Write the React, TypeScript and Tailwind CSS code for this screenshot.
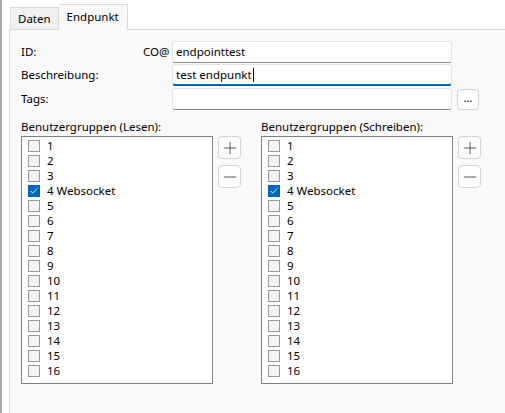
import { Check, Minus, Plus } from 'lucide-react'

const groups = ['1', '2', '3', '4 Websocket', '5', '6', '7', '8', '9', '10', '11', '12', '13', '14', '15', '16']

const TextField = ({ value, focused }: { value: string; focused?: boolean }) => (
    <div
        className={`w-[280px] h-[22px] bg-white rounded-[3px] border border-[#e3e3e3] flex items-center pl-[3px] text-[11.5px] text-black ${
            focused ? 'border-b-2 border-b-[#0067c0]' : 'border-b-[#8a8a8a]'
        }`}
    >
        <span>{value}</span>
        {focused && <span className="inline-block w-px h-[14px] bg-black ml-[1px]" />}
    </div>
)

const SmallButton = ({ children }: { children: React.ReactNode }) => (
    <div className="w-[23px] h-[23px] rounded-[4px] border border-[#d5d5d5] bg-[#fdfdfd] flex items-center justify-center text-[#3a3a3a]">
        {children}
    </div>
)

const GroupList = ({ title }: { title: string }) => (
    <div className="flex flex-col">
        <p className="text-[11.5px] leading-[15px] h-[15px] mb-[2px] text-black">{title}</p>
        <div className="flex gap-[5px]">
            <div className="w-[192px] h-[248px] bg-white border border-[#7e7e84] pt-[1px] pl-[6px]">
                {groups.map((g) => {
                    const checked = g === '4 Websocket'
                    return (
                        <div key={g} className="h-[15px] flex items-center">
                            <div
                                className={`w-[12px] h-[12px] flex items-center justify-center ${
                                    checked ? 'bg-[#0067c0] border border-[#0067c0]' : 'bg-[#f3f3f3] border border-[#9a9a9a]'
                                }`}
                            >
                                {checked && <Check size={10} strokeWidth={2} color="white" />}
                            </div>
                            <span className="ml-[7px] text-[11.5px] leading-[15px] text-black">{g}</span>
                        </div>
                    )
                })}
            </div>
            <div className="flex flex-col gap-[6px]">
                <SmallButton>
                    <Plus size={20} strokeWidth={1} />
                </SmallButton>
                <SmallButton>
                    <Minus size={20} strokeWidth={1} />
                </SmallButton>
            </div>
        </div>
    </div>
)

const App = () => {
    return (
        <div className="w-[505px] h-[413px] bg-white flex overflow-hidden font-['Noto_Sans',sans-serif]">
            <div className="w-[2px] h-full bg-[#a9a9a9]" />
            <div className="flex-1 flex flex-col pl-[7px]">
                {/* Tabs */}
                <div className="h-[29px] flex items-end pl-[1px]">
                    <div className="h-[22px] px-[7px] bg-[#f0f0f0] border border-[#dadada] border-b-0 flex items-center text-[11.5px] text-black">
                        Daten
                    </div>
                    <div className="relative z-10 -mb-px h-[26px] px-[8px] bg-[#f9f9f9] border border-[#dadada] border-b-0 border-l-0 flex items-start pt-[3px] text-[11.5px] text-black">
                        Endpunkt
                    </div>
                </div>

                {/* Panel */}
                <div className="flex-1 bg-[#f9f9f9] border-l border-t border-[#dadada] pl-[11px] pt-[11px]">
                    <div className="flex flex-col gap-[1px]">
                        <div className="flex items-center">
                            <span className="w-[122px] text-[11.5px] text-black">ID:</span>
                            <span className="w-[29px] text-[11.5px] text-black">CO@</span>
                            <TextField value="endpointtest" />
                        </div>
                        <div className="flex items-center">
                            <span className="w-[151px] text-[11.5px] text-black">Beschreibung:</span>
                            <TextField value="test endpunkt" focused />
                        </div>
                        <div className="flex items-center mt-[1px]">
                            <span className="w-[151px] text-[11.5px] text-black">Tags:</span>
                            <TextField value="" />
                            <div className="ml-[5px] w-[22px] h-[21px] rounded-[4px] border border-[#d5d5d5] bg-[#fdfdfd] flex items-center justify-center text-[11px] leading-none text-black pb-[3px]">
                                ...
                            </div>
                        </div>
                    </div>

                    <div className="flex gap-[20px] mt-[9px]">
                        <GroupList title="Benutzergruppen (Lesen):" />
                        <GroupList title="Benutzergruppen (Schreiben):" />
                    </div>
                </div>
            </div>
        </div>
    )
}

export default App
